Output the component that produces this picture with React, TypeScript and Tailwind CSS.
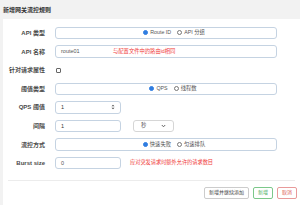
import React from "react"

const font = { fontFamily: '"Liberation Sans", "Noto Sans CJK SC", sans-serif' }

const Radio = ({ checked, label }: { checked?: boolean; label: string }) => (
	<span className="flex items-center gap-[2px]">
		<span
			className={
				checked
					? "w-[5px] h-[5px] rounded-full bg-[#2f7de1] border border-[#2f7de1]"
					: "w-[5px] h-[5px] rounded-full bg-white border-[0.7px] border-[#777]"
			}
		/>
		<span className="text-[5.3px] text-[#555]">{label}</span>
	</span>
)

const Row = ({ label, children }: { label: string; children: React.ReactNode }) => (
	<div className="flex items-center h-[18.6px]">
		<div className="w-[42px] shrink-0 text-right text-[6px] font-semibold text-[#4a4a4a] leading-none">{label}</div>
		<div className="ml-[10px] flex items-center flex-1 min-w-0">{children}</div>
	</div>
)

const boxCls = "h-[12.5px] rounded-[3px] border border-[#c5d3e2] bg-white flex items-center"

export default function App() {
	return (
		<div className="w-[300px] h-[205px] bg-[#f2f2f2] flex flex-col overflow-hidden" style={font}>
			<div className="h-[19px] flex items-center pl-[3px] shrink-0">
				<span className="text-[6px] font-bold text-[#333] leading-none">新增网关流控规则</span>
			</div>
			<div className="flex-1 ml-[3px] bg-white pt-[4.7px] flex flex-col">
				<Row label="API 类型">
					<div className={`${boxCls} w-[222px] justify-center gap-[6px] pl-[16px]`}>
						<Radio checked label="Route ID" />
						<Radio label="API 分组" />
					</div>
				</Row>
				<Row label="API 名称">
					<div className={`${boxCls} w-[222px] px-[5px] relative`}>
						<span className="text-[5.5px] text-[#555]">route01</span>
						<span className="absolute left-[57px] text-[5.3px] text-[#f03a3a]">与配置文件中的路由id相同</span>
					</div>
				</Row>
				<Row label="针对请求属性">
					<span className="ml-[1px] w-[5px] h-[5px] rounded-[1px] border-[0.7px] border-[#666] bg-white" />
				</Row>
				<Row label="阈值类型">
					<div className={`${boxCls} w-[222px] justify-center gap-[6px] pl-[14px]`}>
						<Radio checked label="QPS" />
						<Radio label="线程数" />
					</div>
				</Row>
				<Row label="QPS 阈值">
					<div className={`${boxCls} w-[66px] px-[5px] justify-between`}>
						<span className="text-[5.5px] text-[#333]">1</span>
						<svg width="4" height="6" viewBox="0 0 4 6">
							<path d="M0.5 2.3 L2 0.8 L3.5 2.3 Z M0.5 3.7 L2 5.2 L3.5 3.7 Z" fill="#555" />
						</svg>
					</div>
				</Row>
				<Row label="间隔">
					<div className={`${boxCls} w-[66px] px-[5px]`}>
						<span className="text-[5.5px] text-[#333]">1</span>
					</div>
					<div className={`${boxCls} ml-[12px] w-[41px] px-[7px] justify-between border-[#d6d6d6]`}>
						<span className="text-[5.3px] text-[#555]">秒</span>
						<svg width="5" height="4" viewBox="0 0 5 4">
							<path d="M0.8 1 L2.5 2.8 L4.2 1" stroke="#555" strokeWidth="0.9" fill="none" />
						</svg>
					</div>
				</Row>
				<Row label="流控方式">
					<div className={`${boxCls} w-[222px] justify-center gap-[6px] pl-[16px]`}>
						<Radio checked label="快速失败" />
						<Radio label="匀速排队" />
					</div>
				</Row>
				<Row label="Burst size">
					<div className={`${boxCls} w-[66px] px-[5px]`}>
						<span className="text-[5.5px] text-[#555]">0</span>
					</div>
					<span className="ml-[9px] text-[5.2px] text-[#f03a3a] whitespace-nowrap">应对突发请求时额外允许的请求数目</span>
				</Row>
				<div className="mt-[7.5px] mx-[5px] border-t border-[#ececec]" />
				<div className="flex justify-end items-center gap-[4px] pr-[3px] mt-[6px]">
					<button className="h-[12px] px-[4px] rounded-[2px] border-[0.7px] border-[#ccc] bg-white text-[5px] text-[#444]">
						新增并继续添加
					</button>
					<button className="h-[12px] w-[20px] rounded-[2px] border-[0.7px] border-[#7cc88a] bg-white text-[5px] text-[#4cae5c]">
						新增
					</button>
					<button className="h-[12px] w-[20px] rounded-[2px] border-[0.7px] border-[#e89a9a] bg-white text-[5px] text-[#d9534f]">
						取消
					</button>
				</div>
			</div>
		</div>
	)
}
